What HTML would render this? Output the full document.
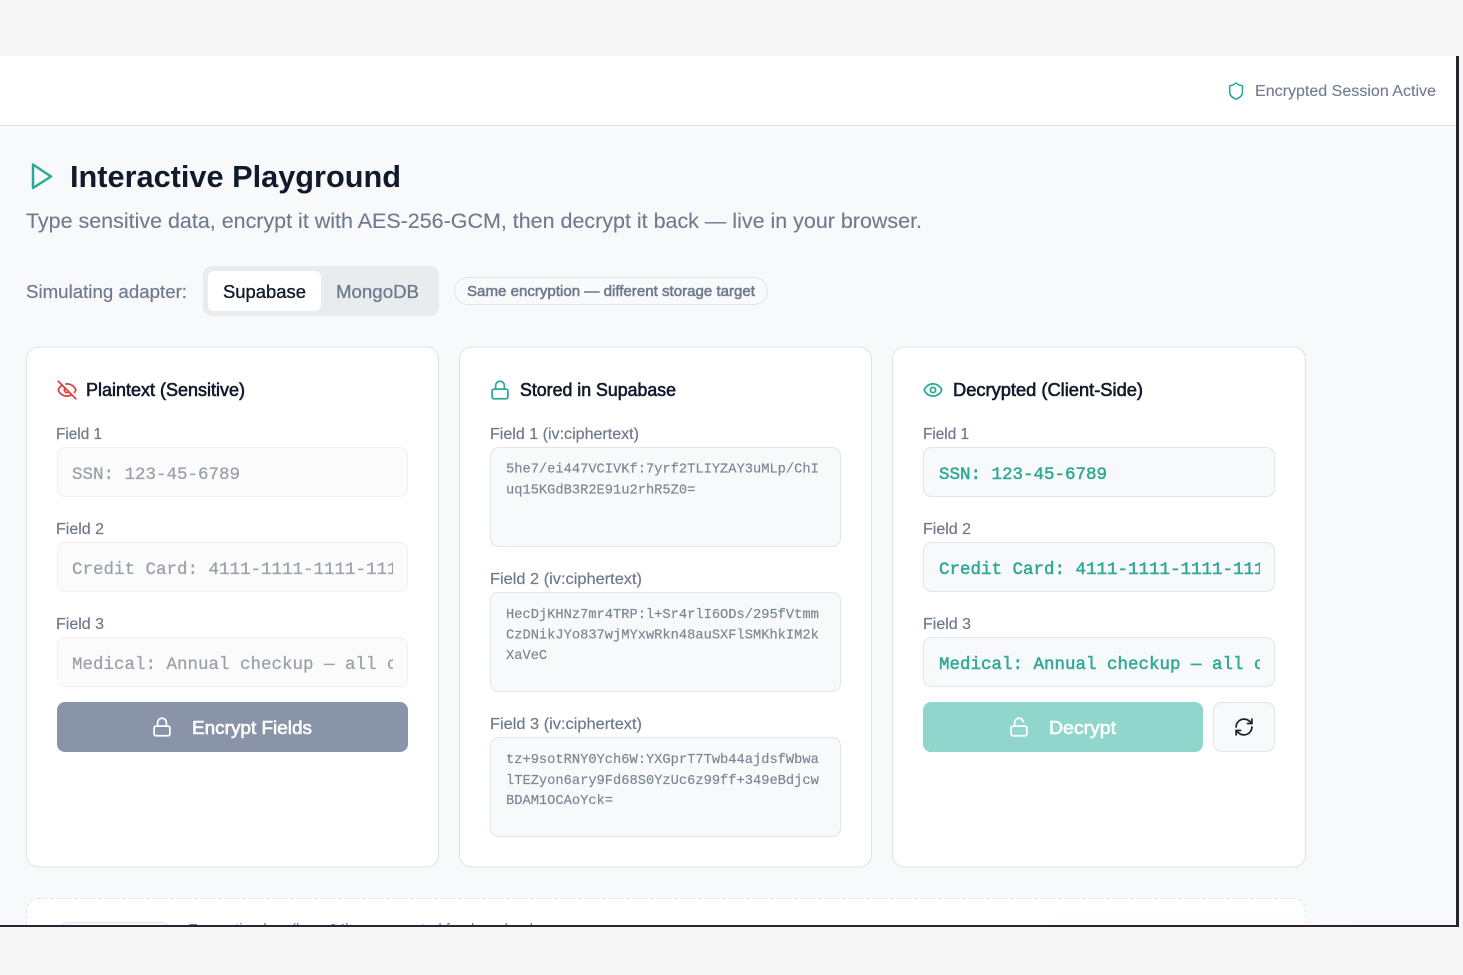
<!DOCTYPE html>
<html lang="en">
<head>
<meta charset="utf-8">
<title>Interactive Playground</title>
<style>
html,body{margin:0;padding:0;width:1463px;height:975px;overflow:hidden;background:#f6f6f7}
svg{display:block}
text{font-family:"Liberation Sans",sans-serif;white-space:pre}
.m{font-family:"Liberation Mono",monospace}
.lb{font-size:15.5px;fill:#6f7a8c;stroke:#6f7a8c;stroke-width:.2px}
.hd{font-size:18px;fill:#121a2b;stroke:#121a2b;stroke-width:.6px}
.ph{font-size:17.5px;fill:#9aa0a9;stroke:#9aa0a9;stroke-width:.25px}
.gr{font-size:17.5px;fill:#2fa898;stroke:#2fa898;stroke-width:.5px}
.ci{font-size:13.73px;fill:#7d8795;stroke:#7d8795;stroke-width:.2px}
.ic{fill:none;stroke-width:2;stroke-linecap:round;stroke-linejoin:round}
.bt{font-size:18px;fill:#fff;stroke:#fff;stroke-width:.6px}
</style>
</head>
<body>
<svg width="1463" height="975" viewBox="0 0 1463 975" xmlns="http://www.w3.org/2000/svg">
<defs>
<clipPath id="c1"><rect x="72" y="447" width="321" height="240"/></clipPath>
<clipPath id="c3"><rect x="939" y="447" width="321" height="240"/></clipPath>
<clipPath id="cv"><rect x="0" y="56" width="1456" height="869"/></clipPath>
<filter id="bl" x="-20%" y="-200%" width="140%" height="500%"><feGaussianBlur stdDeviation="10"/></filter>
</defs>

<rect width="1463" height="975" fill="#f6f6f7"/>
<rect x="0" y="56" width="1456" height="869" fill="#f8f9fb"/>
<rect x="0" y="56" width="1456" height="69" fill="#ffffff"/>
<rect x="0" y="125" width="1456" height="1" fill="#dfe2e7"/>

<!-- top bar -->
<g class="ic" stroke="#2fa898" transform="translate(1226.5 81.5) scale(.8)"><path d="M20 13c0 5-3.5 7.5-7.66 8.95a1 1 0 0 1-.67-.01C7.5 20.5 4 18 4 13V6a1 1 0 0 1 1-1c2 0 4.5-1.2 6.24-2.72a1.17 1.17 0 0 1 1.52 0C14.51 3.81 17 5 19 5a1 1 0 0 1 1 1z"/></g>
<text x="1255" y="96" font-size="15.5" fill="#727c8d" stroke="#727c8d" stroke-width=".12" textLength="181" lengthAdjust="spacingAndGlyphs">Encrypted Session Active</text>

<!-- title -->
<polygon points="33,164.5 51,176.5 33,188" fill="none" stroke="#2aa99a" stroke-width="2.5" stroke-linejoin="round"/>
<text x="70" y="187" font-size="30.5" font-weight="700" fill="#111a2b" textLength="331" lengthAdjust="spacingAndGlyphs">Interactive Playground</text>
<text x="26" y="228" font-size="21" fill="#6f7a8c" stroke="#6f7a8c" stroke-width=".12" textLength="896" lengthAdjust="spacingAndGlyphs">Type sensitive data, encrypt it with AES-256-GCM, then decrypt it back — live in your browser.</text>

<!-- adapter row -->
<text x="26" y="298" font-size="18" fill="#6f7a8c" stroke="#6f7a8c" stroke-width=".2" textLength="161" lengthAdjust="spacingAndGlyphs">Simulating adapter:</text>
<rect x="203" y="266" width="236" height="50" rx="9" fill="#e9ecef"/>
<rect x="208" y="271" width="113" height="40" rx="6" fill="#ffffff"/>
<text x="223" y="298" font-size="18" fill="#111a2b" stroke="#111a2b" stroke-width=".35" textLength="83" lengthAdjust="spacingAndGlyphs">Supabase</text>
<text x="336" y="298" font-size="18" fill="#6f7a8c" stroke="#6f7a8c" stroke-width=".3" textLength="83" lengthAdjust="spacingAndGlyphs">MongoDB</text>
<rect x="454.5" y="277.5" width="313" height="27" rx="13.5" fill="#f9fafb" stroke="#dfe3e8"/>
<text x="467" y="296" font-size="14.5" fill="#6f7a8c" stroke="#6f7a8c" stroke-width=".55" textLength="288" lengthAdjust="spacingAndGlyphs">Same encryption — different storage target</text>

<!-- card 1 -->
<rect x="26.5" y="347" width="412" height="520" rx="12" fill="#fff" stroke="#dfe2e8"/>
<g class="ic" stroke="#d9403f" transform="translate(56.5 379.5) scale(.875)"><path d="M10.733 5.076a10.744 10.744 0 0 1 11.205 6.575 1 1 0 0 1 0 .696 10.747 10.747 0 0 1-1.444 2.49"/><path d="M14.084 14.158a3 3 0 0 1-4.242-4.242"/><path d="M17.479 17.499a10.75 10.75 0 0 1-15.417-5.151 1 1 0 0 1 0-.696 10.75 10.75 0 0 1 4.446-5.143"/><path d="m2 2 20 20"/></g>
<text class="hd" x="86" y="396" textLength="159" lengthAdjust="spacingAndGlyphs">Plaintext (Sensitive)</text>
<text class="lb" x="56" y="439" textLength="46" lengthAdjust="spacingAndGlyphs">Field 1</text>
<rect x="57.5" y="447.5" width="350" height="49" rx="8" fill="#fbfbfc" stroke="#f0f1f4"/>
<text class="lb" x="56" y="534" textLength="48" lengthAdjust="spacingAndGlyphs">Field 2</text>
<rect x="57.5" y="542.5" width="350" height="49" rx="8" fill="#fbfbfc" stroke="#f0f1f4"/>
<text class="lb" x="56" y="629" textLength="48" lengthAdjust="spacingAndGlyphs">Field 3</text>
<rect x="57.5" y="637.5" width="350" height="49" rx="8" fill="#fbfbfc" stroke="#f0f1f4"/>
<g clip-path="url(#c1)">
<text class="m ph" x="72" y="479">SSN: 123-45-6789</text>
<text class="m ph" x="72" y="574">Credit Card: 4111-1111-1111-1111</text>
<text class="m ph" x="72" y="669">Medical: Annual checkup — all clear</text>
</g>
<rect x="57" y="702" width="351" height="50" rx="8" fill="#8a94a8"/>
<g class="ic" stroke="#fff" transform="translate(151.5 716.5) scale(.875)"><rect x="3" y="11" width="18" height="11" rx="2"/><path d="M7 11V7a5 5 0 0 1 10 0v4"/></g>
<text class="bt" x="192" y="734" textLength="120" lengthAdjust="spacingAndGlyphs">Encrypt Fields</text>

<!-- card 2 -->
<rect x="459.5" y="347" width="412" height="520" rx="12" fill="#fff" stroke="#dfe2e8"/>
<g class="ic" stroke="#2fa898" transform="translate(489.5 379.5) scale(.875)"><rect x="3" y="11" width="18" height="11" rx="2"/><path d="M7 11V7a5 5 0 0 1 10 0v4"/></g>
<text class="hd" x="520" y="396" textLength="156" lengthAdjust="spacingAndGlyphs">Stored in Supabase</text>
<text class="lb" x="490" y="439" textLength="149" lengthAdjust="spacingAndGlyphs">Field 1 (iv:ciphertext)</text>
<rect x="490.5" y="447.5" width="350" height="99" rx="8" fill="#f8f9fb" stroke="#e2e5ea"/>
<text class="m ci" x="506" y="472.5">5he7/ei447VCIVKf:7yrf2TLIYZAY3uMLp/ChI</text>
<text class="m ci" x="506" y="493.5">uq15KGdB3R2E91u2rhR5Z0=</text>
<text class="lb" x="490" y="584" textLength="152" lengthAdjust="spacingAndGlyphs">Field 2 (iv:ciphertext)</text>
<rect x="490.5" y="592.5" width="350" height="99" rx="8" fill="#f8f9fb" stroke="#e2e5ea"/>
<text class="m ci" x="506" y="618">HecDjKHNz7mr4TRP:l+Sr4rlI6ODs/295fVtmm</text>
<text class="m ci" x="506" y="638.5">CzDNikJYo837wjMYxwRkn48auSXFlSMKhkIM2k</text>
<text class="m ci" x="506" y="659">XaVeC</text>
<text class="lb" x="490" y="729" textLength="152" lengthAdjust="spacingAndGlyphs">Field 3 (iv:ciphertext)</text>
<rect x="490.5" y="737.5" width="350" height="99" rx="8" fill="#f8f9fb" stroke="#e2e5ea"/>
<text class="m ci" x="506" y="763">tz+9sotRNY0Ych6W:YXGprT7Twb44ajdsfWbwa</text>
<text class="m ci" x="506" y="784">lTEZyon6ary9Fd68S0YzUc6z99ff+349eBdjcw</text>
<text class="m ci" x="506" y="804">BDAM1OCAoYck=</text>

<!-- card 3 -->
<rect x="892.5" y="347" width="413" height="520" rx="12" fill="#fff" stroke="#dfe2e8"/>
<g class="ic" stroke="#2fa898" transform="translate(922.5 379.5) scale(.875)"><path d="M2.062 12.348a1 1 0 0 1 0-.696 10.75 10.75 0 0 1 19.876 0 1 1 0 0 1 0 .696 10.75 10.75 0 0 1-19.876 0"/><circle cx="12" cy="12" r="3"/></g>
<text class="hd" x="953" y="396" textLength="190" lengthAdjust="spacingAndGlyphs">Decrypted (Client-Side)</text>
<text class="lb" x="923" y="439" textLength="46" lengthAdjust="spacingAndGlyphs">Field 1</text>
<rect x="923.5" y="447.5" width="351" height="49" rx="8" fill="#f8f9fb" stroke="#e2e5ea"/>
<text class="lb" x="923" y="534" textLength="48" lengthAdjust="spacingAndGlyphs">Field 2</text>
<rect x="923.5" y="542.5" width="351" height="49" rx="8" fill="#f8f9fb" stroke="#e2e5ea"/>
<text class="lb" x="923" y="629" textLength="48" lengthAdjust="spacingAndGlyphs">Field 3</text>
<rect x="923.5" y="637.5" width="351" height="49" rx="8" fill="#f8f9fb" stroke="#e2e5ea"/>
<g clip-path="url(#c3)">
<text class="m gr" x="939" y="479">SSN: 123-45-6789</text>
<text class="m gr" x="939" y="574">Credit Card: 4111-1111-1111-1111</text>
<text class="m gr" x="939" y="669">Medical: Annual checkup — all clear</text>
</g>
<rect x="923" y="702" width="280" height="50" rx="8" fill="#90d6cd"/>
<g class="ic" stroke="#fff" transform="translate(1008.5 716.5) scale(.875)"><rect x="3" y="11" width="18" height="11" rx="2"/><path d="M7 11V7a5 5 0 0 1 9.9-1"/></g>
<text class="bt" x="1049" y="734" textLength="67" lengthAdjust="spacingAndGlyphs">Decrypt</text>
<rect x="1213.5" y="702.5" width="61" height="49" rx="8" fill="#f8f9fb" stroke="#e2e5ea"/>
<g class="ic" stroke="#1a2230" transform="translate(1233.5 716.5) scale(.875)"><path d="M3 12a9 9 0 0 1 9-9 9.75 9.75 0 0 1 6.74 2.74L21 8"/><path d="M21 3v5h-5"/><path d="M21 12a9 9 0 0 1-9 9 9.75 9.75 0 0 1-6.74-2.74L3 16"/><path d="M8 16H3v5"/></g>

<!-- clipped lower card -->
<g clip-path="url(#cv)">
<rect x="26.5" y="898.5" width="1279" height="80" rx="12" fill="#fff" stroke="#dfe2e7" stroke-dasharray="3 3"/>
<rect x="60.5" y="922.5" width="110" height="30" rx="8" fill="#f8f9fb" stroke="#e2e5ea"/>
<text x="188" y="934" font-size="15" fill="#6f7a8c" textLength="345" lengthAdjust="spacingAndGlyphs">Encryption key (base64) — generated fresh on load</text>
<rect x="1050" y="922" width="290" height="30" fill="#fafbfc" opacity=".8" filter="url(#bl)"/>
</g>

<!-- dark frame edges -->
<rect x="1456" y="56" width="3" height="871" fill="#26262b"/>
<rect x="0" y="925" width="1459" height="2" fill="#2b2233"/>
</svg>
</body>
</html>
